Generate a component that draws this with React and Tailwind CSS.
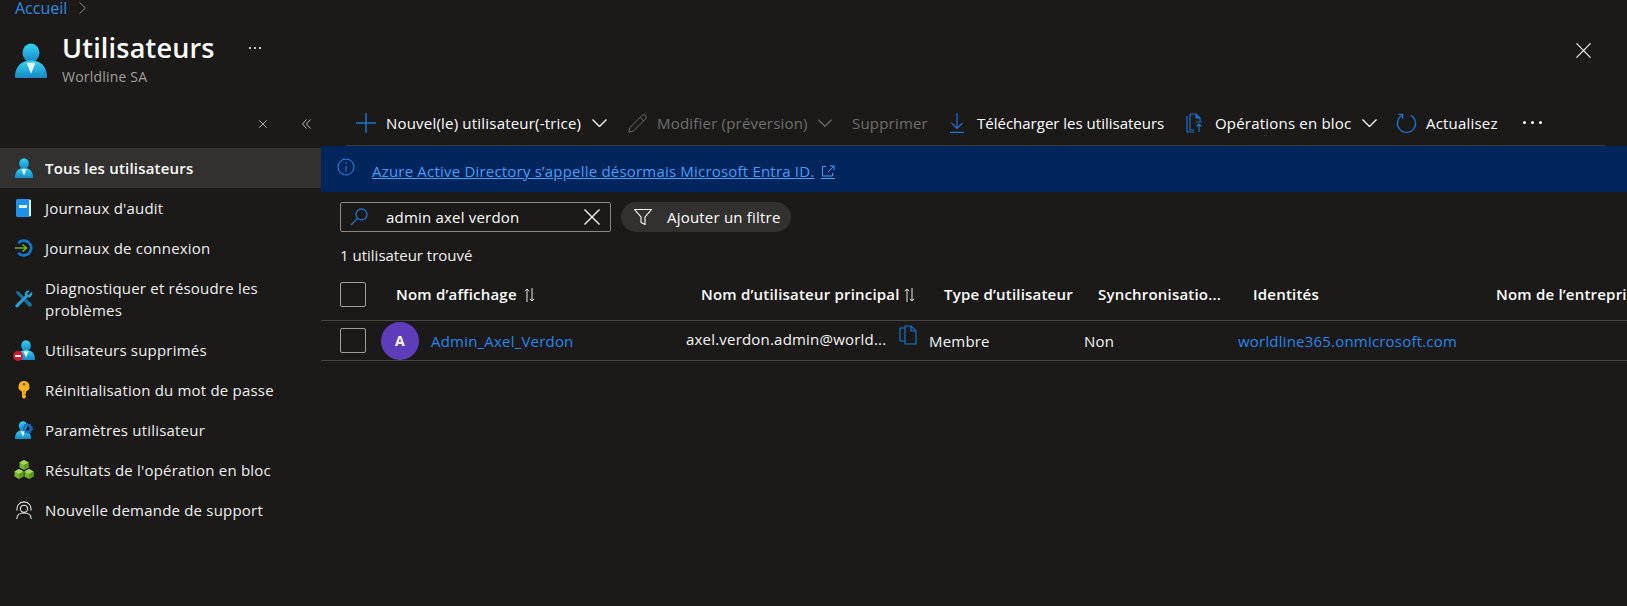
import { Pencil } from 'lucide-react'

const PersonIcon = ({ className, id }) => (
  <svg className={className} viewBox="0 0 32 32" preserveAspectRatio="none">
    <defs>
      <linearGradient id={id} x1="0" y1="0" x2="0" y2="1">
        <stop offset="0" stopColor="#32d4f5" />
        <stop offset="1" stopColor="#1988c4" />
      </linearGradient>
    </defs>
    <circle cx="16" cy="9" r="8.5" fill={`url(#${id})`} />
    <path d="M0 31c0-10 7-15 16-15s16 5 16 15c0 .6-.4 1-1 1H1c-.6 0-1-.4-1-1z" fill={`url(#${id})`} />
    <path d="M11.5 18h9L16 28z" fill="#e8f6fc" />
  </svg>
)

const AuditIcon = () => (
  <svg className="size-[18px]" viewBox="0 0 18 18">
    <rect x="1" y="0" width="15" height="18" rx="1.5" fill="#1b93eb" />
    <rect x="14" y="1" width="2" height="16" fill="#e6f3fc" />
    <rect x="4" y="6" width="8" height="3" fill="#e6f3fc" />
  </svg>
)

const SignInIcon = () => (
  <svg className="size-[18px]" viewBox="0 0 18 18" fill="none">
    <path d="M3.2 4.2A7.4 7.4 0 1 1 3.2 13.8" stroke="#0f78d4" strokeWidth="2.6" />
    <path d="M0 9h11M7.5 5.5 11.5 9l-4 3.5" stroke="#6bb700" strokeWidth="1.6" />
  </svg>
)

const WrenchIcon = () => (
  <svg className="size-[18px]" viewBox="0 0 18 18">
    <path d="M1 1.5 3 1l13.5 12.5c.6.6.6 2-.2 2.8-.8.7-2 .7-2.7 0L1.5 3.5z" fill="#1b6f9e" />
    <path d="M17 1.5 13.5 5 12 4l2.8-3.2c-1.8-.6-3.800.2-4.600 1.800-.5 1-.4 2 0 2.900L.8 14.500c-.7.8-.6 1.900.1 2.500.7.600 1.700.500 2.300-.1l9.100-9.600c1.500.6 3 .2 4-1 .9-1.100 1.100-3 .7-4.800z" fill="#2b9fd0" />
  </svg>
)

const KeyIcon = () => (
  <svg className="size-[18px]" viewBox="0 0 18 18">
    <path d="M9 0a5.500 5.500 0 0 0-2 10.600V16l2 2 2-2v-1.500l-1-1 1-1v-1.900A5.500 5.500 0 0 0 9 0z" fill="#fcb71e" />
    <circle cx="9" cy="3.300" r="1.300" fill="#7a5a10" />
    <rect x="8.500" y="9" width="1" height="7" fill="#d98a0a" />
  </svg>
)

const UserGearIcon = () => (
  <div className="relative h-[18px] w-5">
    <PersonIcon id="ug" className="absolute left-0 top-0 h-[18px] w-4" />
    <svg className="absolute right-0 top-[2px] size-[11px]" viewBox="0 0 12 12" fill="none">
      <circle cx="6" cy="6" r="3.600" stroke="#1a6fc9" strokeWidth="2.400" />
      <circle cx="6" cy="6" r="5.300" stroke="#1a6fc9" strokeWidth="1.400" strokeDasharray="1.800 1.500" />
    </svg>
  </div>
)

const CubesIcon = () => (
  <svg className="size-5 shrink-0" viewBox="0 0 20 20">
    <path d="M10 0l4.500 2.500v5L10 10 5.500 7.500v-5z" fill="#76b82a" />
    <path d="M10 0l4.500 2.500L10 5 5.500 2.500z" fill="#a8d85e" />
    <path d="M10 5v5l4.500-2.500v-5z" fill="#5e9a1f" />
    <path d="M5 9l4.500 2.500v5L5 19 .5 16.500v-5z" fill="#76b82a" />
    <path d="M5 9l4.500 2.500L5 14 .5 11.500z" fill="#a8d85e" />
    <path d="M5 14v5l4.500-2.500v-5z" fill="#5e9a1f" />
    <path d="M15 9l4.500 2.500v5L15 19l-4.500-2.500v-5z" fill="#76b82a" />
    <path d="M15 9l4.500 2.500L15 14l-4.500-2.500z" fill="#a8d85e" />
    <path d="M15 14v5l4.500-2.500v-5z" fill="#5e9a1f" />
  </svg>
)

const SupportIcon = () => (
  <svg className="size-[18px]" viewBox="0 0 18 18" fill="none" stroke="#e8e8e8" strokeWidth="1.100">
    <path d="M2.200 9.500a7 7 0 1 1 13.600 0" />
    <circle cx="9" cy="7.800" r="3.600" />
    <path d="M1.800 18c0-3.500 2.500-6 7.200-6s7.200 2.500 7.200 6" />
  </svg>
)

const DeletedUserIcon = () => (
  <div className="relative h-[18px] w-[18px]">
    <PersonIcon id="du" className="absolute left-0.5 -top-px h-5 w-[18px]" />
    <div className="absolute -left-0.5 top-[10px] flex size-[10px] items-center justify-center rounded-full bg-[#d0182a]">
      <div className="h-[2px] w-[6px] bg-white" />
    </div>
  </div>
)

const BulkIcon = () => (
  <svg className="h-5 w-5" viewBox="0 0 20 20" fill="none" stroke="#1a73d0" strokeWidth="1.200">
    <path d="M5 1h6l4 4v3M5 1v16h4" />
    <path d="M2 3v16h7" />
    <path d="M11 1v4h4" fill="#1a73d0" />
    <path d="M14 19v-8M11.500 13.500 14 11l2.500 2.500M11 9h6" />
  </svg>
)

const RefreshIcon = () => (
  <svg className="h-[22px] w-[21px]" viewBox="0 0 22 22" fill="none" stroke="#1a73d0" strokeWidth="1.300">
    <path d="M6.500 3a9.500 9.500 0 1 0 9 0" />
    <path d="M2.500 2h4.500v4.500" />
  </svg>
)

const CopyIcon = () => (
  <svg className="h-[20px] w-[18px]" viewBox="0 0 18 20" fill="none" stroke="#1a73d0" strokeWidth="1.200">
    <path d="M6 1h6l5 5v13H6z" />
    <path d="M12 1v5h5" />
    <path d="M6 3H1v13h5" />
  </svg>
)

const SortIcon = () => (
  <svg className="h-[14px] w-[11px]" viewBox="0 0 11 14" fill="none" stroke="#e8e8e8" strokeWidth="1">
    <path d="M3 14V1M.8 3.200 3 1l2.200 2.200" />
    <path d="M8 0v13M5.800 10.800 8 13l2.200-2.200" />
  </svg>
)

const DownloadIcon = () => (
  <svg className="h-5 w-[14px]" viewBox="0 0 14 20" fill="none" stroke="#1a73d0" strokeWidth="1.200">
    <path d="M7 0v15M1.500 10 7 15.500 12.500 10M0 19.400h14" />
  </svg>
)

const CrossIcon = ({ className, strokeWidth = 1.2 }) => (
  <svg className={className} viewBox="0 0 16 16" fill="none" stroke="currentColor" strokeWidth={strokeWidth}>
    <path d="M.5.500l15 15M15.500.500l-15 15" />
  </svg>
)

const Chevron = ({ className }) => (
  <svg className={className} viewBox="0 0 15 8" fill="none" stroke="currentColor" strokeWidth="1.300">
    <path d="M.5.500 7.500 7.500 14.500.500" />
  </svg>
)

const PlusIcon = () => (
  <svg className="size-5" viewBox="0 0 20 20" fill="none" stroke="#1a73d0" strokeWidth="1.500">
    <path d="M10 0v20M0 10h20" />
  </svg>
)

const FunnelIcon = () => (
  <svg className="h-[16px] w-[18px]" viewBox="0 0 18 16" fill="none" stroke="currentColor" strokeWidth="1.100">
    <path d="M.5.500h17L11 8v7.500L7 13.500V8z" />
  </svg>
)

const SearchGlass = () => (
  <svg className="size-[18px] shrink-0" viewBox="0 0 18 18" fill="none" stroke="#1a73d0" strokeWidth="1.300">
    <circle cx="11.500" cy="6.500" r="5.500" />
    <path d="M7.500 10.500 1 17" />
  </svg>
)

const navItems = [
  { label: 'Journaux d\'audit', icon: <AuditIcon /> },
  { label: 'Journaux de connexion', icon: <SignInIcon /> },
  { label: 'Diagnostiquer et résoudre les problèmes', icon: <WrenchIcon />, tall: true },
  { label: 'Utilisateurs supprimés', icon: <DeletedUserIcon /> },
  { label: 'Réinitialisation du mot de passe', icon: <KeyIcon /> },
  { label: 'Paramètres utilisateur', icon: <UserGearIcon /> },
  { label: 'Résultats de l\'opération en bloc', icon: <CubesIcon /> },
  { label: 'Nouvelle demande de support', icon: <SupportIcon /> },
]

const Sidebar = () => (
  <aside className="w-[321px] shrink-0">
    <div className="flex h-[48px] items-start pl-[259px] pt-[19px] text-[#cfcfcf]">
      <CrossIcon className="size-[8px] mt-[1px]" strokeWidth={1.6} />
      <svg className="ml-[35px] h-[10px] w-[9px]" viewBox="0 0 9 10" fill="none" stroke="currentColor" strokeWidth="0.900">
        <path d="M4.500.500 .5 5l4 4.500M8.500.500 4.500 5l4 4.500" />
      </svg>
    </div>
    <div className="flex h-10 items-center bg-[#323130] pl-[15px] font-semibold text-white">
      <PersonIcon id="nav-all" className="mr-[12px] h-5 w-[18px]" />
      Tous les utilisateurs
    </div>
    {navItems.map((item) => (
      <div
        key={item.label}
        className={`flex items-center pl-[15px] text-[#f0f0f0] ${item.tall ? 'h-[62px] leading-[22px]' : 'h-10'}`}
      >
        <div className="mr-[12px] flex w-[18px] shrink-0 justify-center">{item.icon}</div>
        <span className="w-[245px]">{item.label}</span>
      </div>
    ))}
  </aside>
)

const Toolbar = () => (
  <div className="ml-[25px] mr-[22px] flex h-[46px] items-start border-b border-[#3b3a39] pt-[7px] text-white">
    <div className="ml-[10px] flex h-8 items-center">
      <PlusIcon />
      <span className="ml-[10px] w-[195px] whitespace-nowrap">Nouvel(le) utilisateur(-trice)</span>
      <Chevron className="ml-[11px] h-2 w-[15px]" />
    </div>
    <div className="ml-[20px] flex h-8 items-center text-[#6f6e6d]">
      <Pencil className="size-[21px]" strokeWidth={1.1} />
      <span className="ml-[9px] w-[150px] whitespace-nowrap">Modifier (préversion)</span>
      <Chevron className="ml-[11px] h-2 w-[14px]" />
    </div>
    <div className="ml-[20px] flex h-8 items-center text-[#6f6e6d]">
      <span className="w-[75px] whitespace-nowrap">Supprimer</span>
    </div>
    <div className="ml-[23px] flex h-8 items-center">
      <DownloadIcon />
      <span className="ml-[13px] w-[187px] whitespace-nowrap tracking-normal">Télécharger les utilisateurs</span>
    </div>
    <div className="ml-[21px] flex h-8 items-center">
      <BulkIcon />
      <span className="ml-[10px] w-[136px] whitespace-nowrap">Opérations en bloc</span>
      <Chevron className="ml-[11px] h-2 w-[15px]" />
    </div>
    <div className="ml-[19px] flex h-8 items-center">
      <RefreshIcon />
      <span className="ml-[9px] w-[72px] whitespace-nowrap">Actualisez</span>
    </div>
    <div className="ml-[25px] flex h-8 items-center gap-[5px] pb-0.5">
      <div className="size-[3px] rounded-full bg-white" />
      <div className="size-[3px] rounded-full bg-white" />
      <div className="size-[3px] rounded-full bg-white" />
    </div>
  </div>
)

const Banner = () => (
  <div className="flex h-[46px] items-start bg-[#00245c] pl-[16px] pt-[12px] text-[#479ef5]">
    <svg className="size-[18px]" viewBox="0 0 18 18" fill="none" stroke="#2d8ae6" strokeWidth="1">
      <circle cx="9" cy="9" r="8" />
      <path d="M9 8v5.500M9 4.500v1.500" />
    </svg>
    <span className="ml-[17px] mt-[2px] underline">Azure Active Directory s’appelle désormais Microsoft Entra ID.</span>
    <svg className="ml-[6px] mt-[7px] size-[14px]" viewBox="0 0 14 14" fill="none" stroke="#479ef5" strokeWidth="1">
      <path d="M5 1.500H1.500v9.500h10V8M7 7l6-6M9 1h4v4" />
      <path d="M0 13.500h14" />
    </svg>
  </div>
)

const FilterBar = () => (
  <div className="ml-[19px] mt-[10px] flex items-center text-white">
    <div className="flex h-[30px] w-[271px] items-center rounded-[2px] border border-[#8a8886] pl-[9px] pr-[10px]">
      <SearchGlass />
      <span className="ml-[18px] flex-1 whitespace-nowrap">admin axel verdon</span>
      <CrossIcon className="size-[16px]" strokeWidth={1.3} />
    </div>
    <div className="ml-[10px] flex h-[30px] w-[170px] items-center rounded-full bg-[#323130] pl-[13px]">
      <FunnelIcon />
      <span className="ml-[15px] whitespace-nowrap">Ajouter un filtre</span>
    </div>
  </div>
)

const Box = () => <div className="h-[25px] w-[26px] shrink-0 rounded-[2px] border border-[#a19f9d]" />

const UserTable = () => (
  <div>
    <div className="ml-[19px] mt-[13px] h-5 leading-5 tracking-normal text-[#f0f0f0]">1 utilisateur trouvé</div>
    <div className="mt-[17px] flex h-[39px] items-start overflow-hidden border-b border-[#484644] pl-[19px] font-semibold text-white">
      <Box />
      <div className="ml-[30px] flex h-[25px] w-[305px] shrink-0 items-center gap-[7px] whitespace-nowrap">
        Nom d’affichage <SortIcon />
      </div>
      <div className="flex h-[25px] w-[243px] shrink-0 items-center gap-[4px] whitespace-nowrap">
        Nom d’utilisateur principal <SortIcon />
      </div>
      <div className="flex h-[25px] w-[154px] shrink-0 items-center whitespace-nowrap">Type d’utilisateur</div>
      <div className="flex h-[25px] w-[155px] shrink-0 items-center whitespace-nowrap">Synchronisatio...</div>
      <div className="flex h-[25px] w-[243px] shrink-0 items-center whitespace-nowrap">Identités</div>
      <div className="flex h-[25px] shrink-0 items-center whitespace-nowrap">Nom de l’entreprise</div>
    </div>
    <div className="flex h-[40px] items-center border-b border-[#484644] pl-[19px] text-[#f5f5f5]">
      <Box />
      <div className="ml-[15px] flex size-[38px] shrink-0 items-center justify-center rounded-full bg-[#5f3dba] text-[14px] font-bold text-white">
        A
      </div>
      <div className="ml-[12px] mt-px w-[255px] shrink-0 whitespace-nowrap text-[#2487ee]">Admin_Axel_Verdon</div>
      <div className="mb-[3px] w-[213px] shrink-0 whitespace-nowrap">axel.verdon.admin@world...</div>
      <div className="mb-[12px] w-[30px] shrink-0"><CopyIcon /></div>
      <div className="mt-px w-[155px] shrink-0">Membre</div>
      <div className="mt-px w-[154px] shrink-0">Non</div>
      <div className="mt-px whitespace-nowrap text-[#2487ee]">worldline365.onmicrosoft.com</div>
    </div>
  </div>
)

export default function App() {
  return (
    <div className="h-[606px] w-[1627px] overflow-hidden bg-[#1b1a19] font-['Open_Sans','Noto_Sans',sans-serif] text-[15px] tracking-[0.2px] text-white">
      <header className="relative h-[100px] pl-[15px]">
        <div className="flex h-4 items-center text-[16px] leading-4 tracking-normal text-[#2f8ae0]">
          Accueil
          <svg className="ml-[12px] h-3 w-[7px] text-[#8a8886]" viewBox="0 0 7 12" fill="none" stroke="currentColor" strokeWidth="1">
            <path d="M.5.500 6.500 6 .5 11.500" />
          </svg>
        </div>
        <div className="mt-[15px] flex">
          <PersonIcon id="title-user" className="mt-[12px] h-[35px] w-[32px]" />
          <div className="ml-[15px]">
            <div className="flex items-center">
              <h1 className="text-[27px] font-semibold leading-[34px]">Utilisateurs</h1>
              <div className="ml-[34px] flex gap-[3px]">
                <div className="size-[2px] bg-[#c8c6c4]" />
                <div className="size-[2px] bg-[#c8c6c4]" />
                <div className="size-[2px] bg-[#c8c6c4]" />
              </div>
            </div>
            <div className="mt-[2px] text-[14px] leading-[20px] text-[#a19f9d]">Worldline SA</div>
          </div>
        </div>
        <CrossIcon className="absolute left-[1576px] top-[43px] size-[15px]" />
      </header>
      <div className="flex">
        <Sidebar />
        <main className="min-w-0 flex-1">
          <Toolbar />
          <Banner />
          <FilterBar />
          <UserTable />
        </main>
      </div>
    </div>
  )
}
